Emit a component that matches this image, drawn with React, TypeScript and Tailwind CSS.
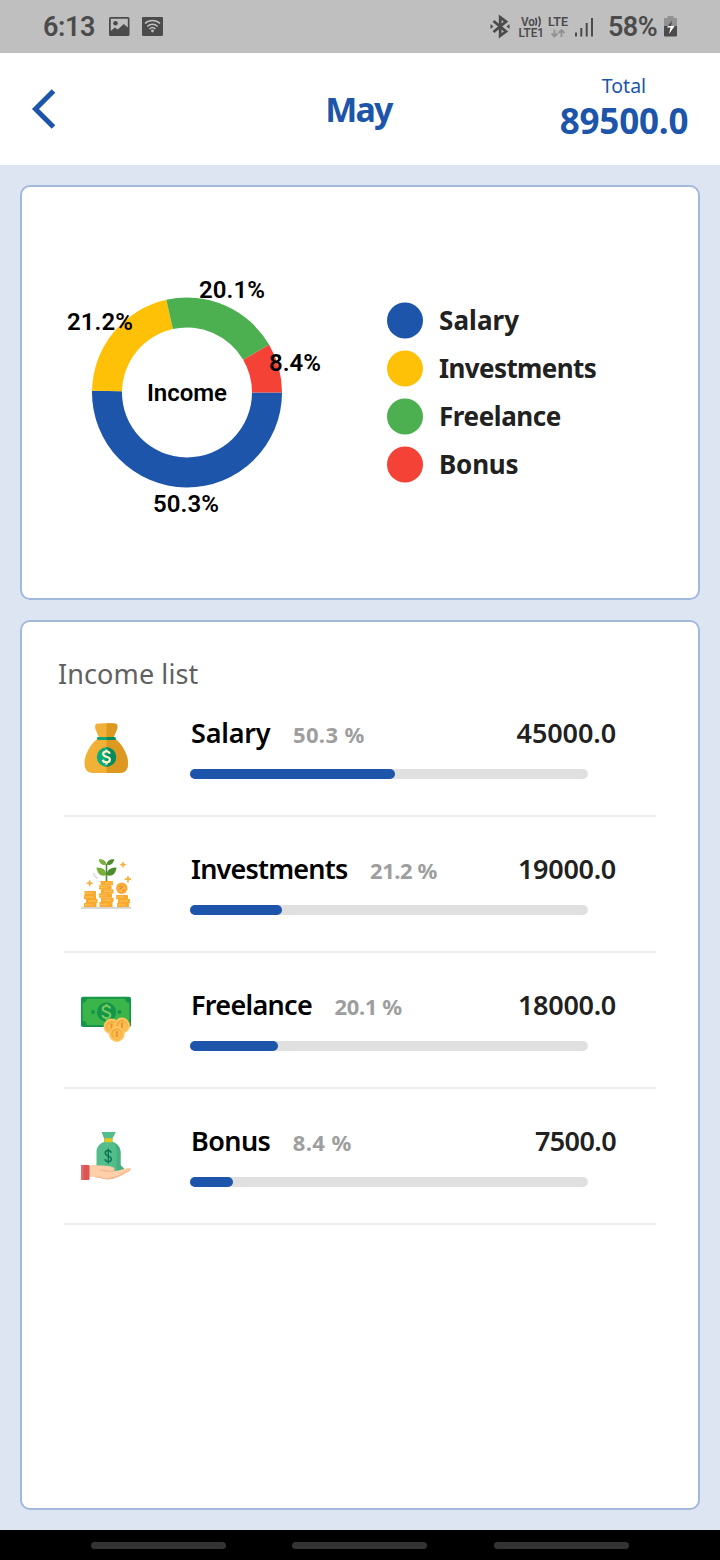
import React from "react";

type Item = {
  name: string;
  percent: string;
  amount: string;
  fill: number;
  icon: React.ReactNode;
  nameClass: string;
  legendClass: string;
  amountClass: string;
  percentClass: string;
  dotClass: string;
};

function MoneyBag() {
  return (
    <svg width="50" height="50" viewBox="0 0 50 50">
      <path d="M15.500 .8C13.500 1.500 14 5.500 15 7.500c1 3 2.500 5 3 7C9 21 3.500 32 3.500 40c0 7 3 10 9 10H38c6 0 9-3 9-10 0-8-5.500-19-14.500-25.500.5-2 2-4 3-7 1-2 1.500-6-.5-6.700C32 0 18 0 15.500 .8Z" fill="#f1b136" />
      <path d="M25.500 .2c4 0 7.500 0 9.500.6 2 .7 1.500 4.700.5 6.700-1 3-2.500 5-3 7C41.500 21 47 32 47 40c0 7-3 10-9 10H25.500Z" fill="#dd981f" />
      <rect x="16" y="13.900" width="10" height="3" rx="1.200" fill="#12a77a" />
      <path d="M25.500 13.900h8a1.500 1.500 0 0 1 0 3h-8Z" fill="#078b5e" />
      <circle cx="25.500" cy="34" r="9.700" fill="#0dab7c" />
      <path d="M25.500 24.300a9.700 9.700 0 0 1 0 19.400Z" fill="#078b5e" />
      <path d="M28.800 30.700c-.4-1.500-1.600-2.200-3.400-2.200-2 0-3.200 1-3.200 2.500 0 3.600 6.700 2 6.700 5.500 0 1.800-1.400 2.800-3.500 2.800-2 0-3.300-.9-3.600-2.600M25.500 26.500v2M25.500 39.500v2.200" fill="none" stroke="#fff8cd" strokeWidth="2.200" />
    </svg>
  );
}

function CoinStacks() {
  return (
    <svg width="50" height="50" viewBox="0 0 50 50">
      <path d="M25.500 22V5" stroke="#4e8b31" strokeWidth="1.600" />
      <path d="M25.500 16c0-5-4.500-8-10-7.500C16 14.500 20.500 18.500 25.500 16Z" fill="#79ae38" />
      <path d="M25.500 16c0-5 4.500-8 10-7.500C35 14.500 30.500 18.500 25.500 16Z" fill="#4e8b31" />
      <path d="M25.500 5.500c-.5-4-4-5.700-7.800-5.300C18.500 4.500 21.500 7 25.500 5.500Z" fill="#79ae38" />
      <path d="M25.500 5.500c.5-4 4-5.700 7.800-5.300C32.500 4.500 29.500 7 25.500 5.500Z" fill="#4e8b31" />
      <path d="M12.500 14c.5 2.500 2 4.500 4.500 5.500" fill="none" stroke="#dedde5" strokeWidth="1.600" />
      <g fill="#f8a92f">
        <rect x="19.500" y="22" width="12.500" height="4.300" rx=".6" />
        <rect x="18" y="26.200" width="12.500" height="4.200" rx=".6" />
        <rect x="20" y="30.300" width="12.500" height="4.200" rx=".6" />
        <rect x="18" y="34.300" width="13" height="4.500" rx=".6" />
        <rect x="20" y="38.700" width="12.500" height="4.400" rx=".6" />
        <rect x="18.500" y="43" width="13" height="5" rx=".6" />
        <rect x="3.500" y="32" width="11.500" height="4.200" rx=".6" />
        <rect x="3" y="36" width="12" height="4.200" rx=".6" />
        <rect x="5" y="40" width="11.500" height="4.200" rx=".6" />
        <rect x="3" y="44" width="12.500" height="4.200" rx=".6" />
        <rect x="35" y="36" width="12" height="4.200" rx=".6" />
        <rect x="37" y="40" width="12" height="4.200" rx=".6" />
        <rect x="36" y="44" width="12" height="4.200" rx=".6" />
      </g>
      <path d="M24 24h8M18 28.200h8M23 32.300h8M18 36.500h8M22 41h8M19 45.500h8M4 34h8M4 38h8M7 42h8M4 46h8M35 38h8M39 42h8M36 46h8" stroke="#ffbd48" strokeWidth="1.600" />
      <circle cx="40.800" cy="29.200" r="5.700" fill="#f8a92f" />
      <circle cx="40.800" cy="29.200" r="3.500" fill="#ffc14e" />
      <path d="m38.300 28 1.700-1.500M41.700 32l1.700-1.500M38.300 30.700l4.300-3.700" stroke="#ec8130" strokeWidth="1.600" />
      <path d="m8.700 21 .9 2.300 2.400.9-2.400.9-.9 2.300-.9-2.300-2.400-.9 2.400-.9ZM42 2.700l.9 2.100 2.300.9-2.300.9-.9 2.100-.9-2.100-2.300-.9 2.300-.9Z" fill="#f9b13d" stroke="#f9b13d" strokeWidth=".5" />
      <path d="M47 17v6.500M43.800 20.200h6.200" stroke="#f9b13d" strokeWidth="1.700" />
      <rect x="0" y="48" width="50" height="1.800" fill="#d8d2d1" />
    </svg>
  );
}

function SmallCoin({ x, y }: { x: number; y: number }) {
  return (
    <g>
      <circle cx={x} cy={y} r="7.900" fill="#ffc45c" />
      <circle cx={x} cy={y} r="5.500" fill="#f2a43a" />
      <circle cx={x + 0.4} cy={y + 0.4} r="4.600" fill="#ffbd51" />
      <path d={`M${x} ${y - 3}v6`} stroke="#e99530" strokeWidth="2" />
    </g>
  );
}

function Banknote() {
  return (
    <svg width="50" height="50" viewBox="0 0 50 50">
      <rect x="0" y="1.700" width="50" height="30.300" rx="2" fill="#14964a" />
      <path d="M6 3.700h38a4.500 4.500 0 0 0 4.300 4.200v18A4.500 4.500 0 0 0 44 30H6a4.500 4.500 0 0 0-4.300-4.200V7.900A4.500 4.500 0 0 0 6 3.700Z" fill="#3bb54a" />
      <circle cx="25.500" cy="17" r="9.600" fill="#14964a" />
      <circle cx="12" cy="17" r="2" fill="#14964a" />
      <circle cx="38.500" cy="17" r="2" fill="#14964a" />
      <path d="M29.300 13.500c-.5-1.700-1.800-2.500-3.900-2.500-2.300 0-3.700 1.100-3.700 2.800 0 4 7.700 2.300 7.700 6.200 0 2-1.500 3-3.900 3-2.300 0-3.800-.9-4.200-2.900M25.500 9v2M25.500 23v2" fill="none" stroke="#79c85b" strokeWidth="2" />
      <SmallCoin x={30.500} y={31.500} />
      <SmallCoin x={41} y={30.500} />
      <SmallCoin x={35.800} y={39} />
    </svg>
  );
}

function HandWithBag() {
  return (
    <svg width="50" height="50" viewBox="0 0 50 50" className="translate-y-px">
      <path d="M20.500 0h14.300l-3.300 6.500v3.500C37 12 39.500 16 39.500 20v12.500c0 2 4 2.500 4 6.500H12.500c0-3 3-4 3-7V20c0-4 2-8 7.500-10V6.500Z" fill="#53bd8c" />
      <path d="M31.500 9.500C37 12 39.500 16 39.500 20v12.500c0 2 4 2.500 4 6.500h-7.500c-1-2-.5-5-.5-8V20c0-5-1.500-8-4-10.500Z" fill="#48b07f" />
      <rect x="23.300" y="6.200" width="8.200" height="4" rx="1" fill="#e5c622" />
      <path d="M30.300 20.700c-.4-1.400-1.400-2.200-3.100-2.200-1.900 0-3 1.100-3 2.600 0 3.600 6.200 2.300 6.200 5.800 0 1.700-1.200 2.700-3.200 2.700-1.900 0-3-.8-3.300-2.500M27.300 16.500v15" fill="none" stroke="#0a7551" strokeWidth="1.400" />
      <path d="M8 34.500c2-1.500 5-1.800 8-1.300 7 .5 15 .3 17 2.800 1 1 .5 2.500-1 3 5 .5 10-2.500 16.500-3.300 1.500 0 2 1.500 1 2.500-6 4-14 8.300-19 9-7 .8-12-2.700-16-2.500L8 45Z" fill="#ffcfaa" />
      <path d="M19 37.800c4 .5 8 2 14 1.200M14 45c5-.3 9 2.500 14 1.800 7-.8 14-4.800 21-9" fill="none" stroke="#f4b48d" strokeWidth="1.100" />
      <rect x="0" y="33" width="8.500" height="15" rx=".8" fill="#dc5555" />
      <path d="M0 34v13a1 1 0 0 0 1 1h1.500V33H1a1 1 0 0 0-1 1Z" fill="#e9696a" />
    </svg>
  );
}

const items: Item[] = [
  { name: "Salary", percent: "50.3 %", amount: "45000.0", fill: 51.6, icon: <MoneyBag />, nameClass: "tracking-[-0.2px]", legendClass: "tracking-[0.1px]", amountClass: "tracking-[-0.1px]", percentClass: "tracking-[0.4px]", dotClass: "bg-[#1c55aa]" },
  { name: "Investments", percent: "21.2 %", amount: "19000.0", fill: 23.2, icon: <CoinStacks />, nameClass: "tracking-[-0.8px]", legendClass: "tracking-[-0.6px]", amountClass: "tracking-[-0.3px]", percentClass: "tracking-[-0.4px]", dotClass: "bg-[#ffc107]" },
  { name: "Freelance", percent: "20.1 %", amount: "18000.0", fill: 22.1, icon: <Banknote />, nameClass: "tracking-[-0.7px]", legendClass: "tracking-[-0.4px]", amountClass: "tracking-[-0.3px]", percentClass: "tracking-[-0.4px]", dotClass: "bg-[#4caf50]" },
  { name: "Bonus", percent: "8.4 %", amount: "7500.0", fill: 10.8, icon: <HandWithBag />, nameClass: "tracking-[-0.6px]", legendClass: "tracking-[-0.2px]", amountClass: "tracking-[-0.6px]", percentClass: "tracking-[0.4px]", dotClass: "bg-[#f44336]" },
];

const slices = [
  { value: 45000, color: "#1c55aa" },
  { value: 19000, color: "#ffc107" },
  { value: 18000, color: "#4caf50" },
  { value: 7500, color: "#f44336" },
];

function Donut() {
  const total = slices.reduce((sum, s) => sum + s.value, 0);
  let start = 0;
  return (
    <svg width="300" height="261" viewBox="50 262 300 261" className="shrink-0">
      {slices.map((s) => {
        const a = (start / total) * Math.PI * 2;
        start += s.value;
        const b = (start / total) * Math.PI * 2;
        const large = b - a > Math.PI ? 1 : 0;
        const p = (r: number, t: number) => `${187 + r * Math.cos(t)} ${392.5 + r * Math.sin(t)}`;
        return <path key={s.color} fill={s.color} d={`M${p(95, a)}A95 95 0 ${large} 1 ${p(95, b)}L${p(65, b)}A65 65 0 ${large} 0 ${p(65, a)}Z`} />;
      })}
      <g className="font-['Roboto',sans-serif] text-[24px] font-semibold" fill="#000">
        <text x="147" y="401" textLength="80">Income</text>
        <text x="199" y="298" textLength="66">20.1%</text>
        <text x="67" y="330" textLength="66">21.2%</text>
        <text x="269" y="371" textLength="52">8.4%</text>
        <text x="153" y="512" textLength="66">50.3%</text>
      </g>
    </svg>
  );
}

function StatusBar() {
  return (
    <div className="flex h-[53px] shrink-0 items-center bg-[#bfbfbf] pl-[43px] font-['Roboto',sans-serif] text-[#4b4b4b]">
      <span className="w-[66px] pt-[2px] text-[27px] font-semibold leading-none tracking-[-0.4px]">6:13</span>
      <svg width="54" height="20" viewBox="109 17 54 20" className="shrink-0">
        <path fillRule="evenodd" fill="#4b4b4b" d="M110.500 17h17.500a1.500 1.500 0 0 1 1.500 1.500v16a1.500 1.500 0 0 1-1.500 1.500h-17.500a1.500 1.500 0 0 1-1.500-1.500v-16a1.500 1.500 0 0 1 1.500-1.500Zm.3 1.700V31l4-3.500 3 2 6-5.500 4 3.500v-8.800Z" />
        <circle cx="115.500" cy="23.300" r="2.300" fill="#4b4b4b" />
        <rect x="142" y="16.700" width="21" height="19.300" rx="1.600" fill="#4b4b4b" />
        <path d="M145 23.500c4-4 11-4 15 0M147.300 26.500c3-3 7.500-3 10.300 0M149.500 29c1.800-1.700 4.200-1.700 6 0" fill="none" stroke="#bfbfbf" strokeWidth="1.500" />
        <circle cx="152.500" cy="31" r="1.400" fill="#bfbfbf" />
      </svg>
      <svg width="108" height="28" viewBox="488 12.500 108 28" className="ml-[325px] shrink-0">
        <path d="m493.500 20.500 12.500 10.500-5.800 4.300V16.800L506 21l-12.500 10.500" fill="none" stroke="#4b4b4b" strokeWidth="2.800" />
        <path d="m490.500 23.500 3 2.500-3 2.500ZM509.500 23.500l-3 2.500 3 2.500Z" fill="#4b4b4b" />
        <g fill="#4b4b4b" className="font-['Roboto',sans-serif] text-[12px] font-semibold">
          <text x="521" y="25" textLength="14" lengthAdjust="spacingAndGlyphs">Vo</text>
          <text x="518.500" y="36" textLength="25.500" lengthAdjust="spacingAndGlyphs">LTE1</text>
          <text x="548" y="25" textLength="20" lengthAdjust="spacingAndGlyphs">LTE</text>
        </g>
        <path d="M535.500 17.300q2 3.700 0 7.700M538.700 16q3 5 0 10.300" fill="none" stroke="#4b4b4b" strokeWidth="1.600" />
        <path d="M554.500 29v7m-3-3 3 3 3-3M561.500 36.500v-7m-3 3 3-3 3 3" fill="none" stroke="#929292" strokeWidth="1.900" />
        <path d="M576 32v4M581.300 27.500v8.500M586.700 22.500V36M592 17.500V36" stroke="#4b4b4b" strokeWidth="2" />
      </svg>
      <span className="ml-[12px] w-[56px] pt-[2px] text-[27px] font-semibold leading-none tracking-[-0.6px]">58%</span>
      <svg width="14" height="22" viewBox="0 0 14 22" className="shrink-0">
        <path d="M3.500 0h6v2H13v8H0V2h3.500Z" fill="#929292" />
        <path d="M0 10h13v9.500a1 1 0 0 1-1 1H1a1 1 0 0 1-1-1Z" fill="#4b4b4b" />
        <path d="M3 11.500 4.100 10H10.700L5 18l1.500-6.500Z" fill="#fff" />
        <path d="m8 4.500-4 5.500h3.100Z" fill="#4b4b4b" />
      </svg>
    </div>
  );
}

export default function App() {
  return (
    <div className="flex h-[1560px] w-[720px] flex-col overflow-hidden bg-[#dde5f3] font-['Noto_Sans',sans-serif]">
      <StatusBar />
      <header className="grid h-[112px] shrink-0 grid-cols-[1fr_120px_1fr] items-center bg-white text-[#1c55aa]">
        <svg width="26" height="42" viewBox="0 0 26 42" className="ml-[31px]" fill="none" stroke="#1c55aa" strokeWidth="5">
          <path d="M22.500 3 4.500 21l18 18" />
        </svg>
        <h1 className="pr-[3px] text-center text-[34px] font-bold leading-none tracking-[-1.800px]">May</h1>
        <div className="mr-[31px] flex w-[130px] flex-col items-center justify-self-end">
          <span className="-mt-[2px] mb-px text-[19.500px] leading-[24px]">Total</span>
          <span className="whitespace-nowrap text-[35px] font-bold leading-[44px] tracking-[-0.200px]">89500.0</span>
        </div>
      </header>
      <main className="flex flex-1 flex-col gap-5 p-5">
        <section className="flex h-[415px] shrink-0 items-center rounded-[10px] border-2 border-[#a3b9dc] bg-white pl-7">
          <Donut />
          <ul className="mb-px ml-[37px] flex flex-col gap-3">
            {items.map((i) => (
              <li key={i.name} className="flex items-center gap-4">
                <span className={`size-9 translate-y-[0.5px] rounded-full ${i.dotClass}`} />
                <span className={`text-[26px] font-bold leading-9 text-[#212121] ${i.legendClass}`}>{i.name}</span>
              </li>
            ))}
          </ul>
        </section>
        <section className="flex flex-1 flex-col rounded-[10px] border-2 border-[#a3b9dc] bg-white">
          <h2 className="h-[75px] shrink-0 pl-9 pt-[34px] text-[27px] leading-9 tracking-[0.1px] text-[#616161]">Income list</h2>
          <ul className="mx-[42px] flex flex-col gap-4">
            {items.map((i) => (
              <li key={i.name} className="flex h-[120px] border-b-2 border-[#eeeeee] pl-[17px]">
                <div className="mt-[26px] shrink-0">{i.icon}</div>
                <div className="ml-[59px] w-[426px] pt-[18px]">
                  <div className="flex h-9 items-baseline whitespace-nowrap">
                    <span className={`pl-px text-[27px] font-semibold leading-9 text-black ${i.nameClass}`}>{i.name}</span>
                    <span className={`ml-[22.500px] text-[22px] font-bold leading-9 text-[#9e9e9e] ${i.percentClass}`}>{i.percent}</span>
                    <span className={`ml-auto text-[27px] font-semibold leading-9 text-[#212121] ${i.amountClass}`}>{i.amount}</span>
                  </div>
                  <div className="mt-[18px] h-[10px] w-[398px] rounded-full bg-[#e0e0e0]">
                    <div className="h-full rounded-full bg-[#1c55aa]" style={{ width: `${i.fill}%` }} />
                  </div>
                </div>
              </li>
            ))}
          </ul>
        </section>
      </main>
      <nav className="flex h-[30px] shrink-0 items-center bg-black pl-[91px]">
        <span className="h-[7px] w-[135px] rounded-full bg-[#333333]" />
        <span className="ml-[66px] h-[7px] w-[135px] rounded-full bg-[#333333]" />
        <span className="ml-[67px] h-[7px] w-[135px] rounded-full bg-[#333333]" />
      </nav>
    </div>
  );
}
